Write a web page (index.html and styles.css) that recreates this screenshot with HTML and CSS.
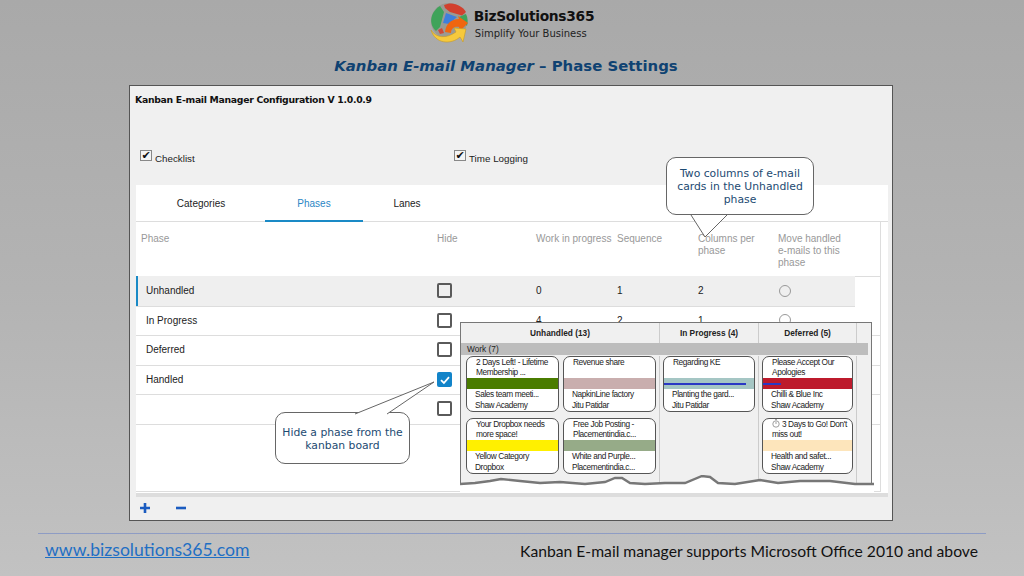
FILE: index.html
```html
<!DOCTYPE html>
<html lang="en">
<head>
    <meta charset="UTF-8">
    <title>Kanban E-mail Manager - Phase Settings</title>
    <link rel="stylesheet" href="styles.css">
</head>
<body>
<div class="slide">
    <header class="brand">
        <svg class="logo" width="42" height="42" viewBox="0 0 42 42">
            <circle cx="20" cy="19" r="18" fill="#9a9a94"/>
            <path d="M15 3C23 -1 33 3 37 10L33 13.5L21 10L16 6Z" fill="#d2402e"/>
            <path d="M11 4L15 10L11 25L7 29C0 23 0 11 11 4Z" fill="#3fa35a"/>
            <path d="M17 11L28 15L20 22L14 21Z" fill="#3f7fdc"/>
            <path d="M30 15L37 12C39 16 39 20 38 24L33 19Z" fill="#3fa35a"/>
            <path d="M9 28L13 26L15 31L11 32Z" fill="#cf4a3a"/>
            <path d="M16 30C17 22 22 17 30 17L29 14L39 21L31 29L30 25C25 24 22 27 22 31Z" fill="#f0660f"/>
            <path d="M2 28C7 36 17 37 27 30L25 26L37 27L34 40L31 35C22 43 6 42 2 28Z" fill="#f6c93c" stroke="#c79a25" stroke-width=".6"/>
        </svg>
        <div class="brand-text">
            <div class="brand-name">BizSolutions365</div>
            <div class="brand-tag">Simplify Your Business</div>
        </div>
    </header>

    <h1 class="slide-title"><em>Kanban E-mail Manager</em> – Phase Settings</h1>

    <main class="window">
        <div class="window-title">Kanban E-mail Manager Configuration V 1.0.0.9</div>
        <div class="options">
            <label class="option option-first"><span class="tick">✔</span>Checklist</label>
            <label class="option"><span class="tick">✔</span>Time Logging</label>
        </div>

        <section class="panel">
            <nav class="tabs">
                <span class="tab">Categories</span>
                <span class="tab tab-active">Phases</span>
                <span class="tab tab-last">Lanes</span>
            </nav>
            <div class="table">
                <div class="row head">
                    <span>Phase</span><span>Hide</span><span>Work in progress</span><span>Sequence</span>
                    <span>Columns per<br>phase</span><span>Move handled<br>e-mails to this<br>phase</span>
                </div>
                <div class="row row-selected">
                    <span>Unhandled</span><span class="box"></span><span>0</span><span>1</span><span>2</span><span class="radio"></span>
                </div>
                <div class="row">
                    <span>In Progress</span><span class="box"></span><span>4</span><span>2</span><span>1</span><span class="radio"></span>
                </div>
                <div class="row">
                    <span>Deferred</span><span class="box"></span>
                </div>
                <div class="row">
                    <span>Handled</span>
                    <span class="box box-on"><svg width="14" height="14" viewBox="0 0 14 14"><path d="M3 7.2L5.9 10L11 4.2" fill="none" stroke="#fff" stroke-width="1.8"/></svg></span>
                </div>
                <div class="row">
                    <span></span><span class="box"></span>
                </div>
            </div>
        </section>

        <div class="toolbar">
            <svg width="12" height="12" viewBox="0 0 12 12"><path d="M6 1V11M1 6H11" stroke="#1b5cc0" stroke-width="2.6"/></svg>
            <svg width="12" height="12" viewBox="0 0 12 12"><path d="M1 6H11" stroke="#1b5cc0" stroke-width="2.6"/></svg>
        </div>
    </main>

    <!-- screenshot of the board pasted over the settings table -->
    <div class="board">
        <div class="board-head">
            <span>Unhandled (13)</span><span>In Progress (4)</span><span>Deferred (5)</span>
        </div>
        <div class="lane">Work (7)</div>
        <div class="cards">
            <div class="col-double">
                <article class="card"><p>2 Days Left! - Lifetime<br>Membership ...</p><i class="band c-green"></i><p class="meta">Sales team meeti...<br>Shaw Academy</p></article>
                <article class="card"><p>Revenue share<br>&nbsp;</p><i class="band c-rose"></i><p class="meta">NapkinLine factory<br>Jitu Patidar</p></article>
                <article class="card"><p>Your Dropbox needs<br>more space!</p><i class="band c-yellow"></i><p class="meta">Yellow Category<br>Dropbox</p></article>
                <article class="card"><p>Free Job Posting -<br>Placementindia.c...</p><i class="band c-sage"></i><p class="meta">White and Purple...<br>Placementindia.c...</p></article>
            </div>
            <div class="col-single">
                <article class="card"><p>Regarding KE<br>&nbsp;</p><i class="band c-teal"><b class="bar bar-long"></b></i><p class="meta">Planting the gard...<br>Jitu Patidar</p></article>
            </div>
            <div class="col-single col-last">
                <article class="card"><p>Please Accept Our<br>Apologies</p><i class="band c-red"><b class="bar bar-short"></b></i><p class="meta">Chilli &amp; Blue Inc<br>Shaw Academy</p></article>
                <article class="card"><p><svg class="timer" width="8" height="9" viewBox="0 0 8 9"><circle cx="4" cy="5" r="3.2" fill="none" stroke="#777" stroke-width=".7"/><path d="M3 .6H5M4 5V2.8" stroke="#777" stroke-width=".7"/></svg> 3 Days to Go! Don't<br>miss out!</p><i class="band c-cream"></i><p class="meta">Health and safet...<br>Shaw Academy</p></article>
            </div>
        </div>
        <svg class="tear" width="414" height="18" viewBox="0 0 414 18">
            <path d="M0 9L15 8L30 6L41 4L60 6L80 8L100 7L125 9L145 7L155 3L162 3L170 8L185 9L205 8L225 8L242 1L250 2L258 8L275 9L300 5L318 8L340 6L370 6L395 9L414 9V18H0Z" fill="#fff"/>
            <path d="M0 9L15 8L30 6L41 4L60 6L80 8L100 7L125 9L145 7L155 3L162 3L170 8L185 9L205 8L225 8L242 1L250 2L258 8L275 9L300 5L318 8L340 6L370 6L395 9L414 9" fill="none" stroke="#777" stroke-width="2.4"/>
        </svg>
    </div>

    <div class="callout callout-columns">
        Two columns of e-mail cards in the Unhandled phase
        <svg class="tail" width="40" height="26" viewBox="0 0 40 26"><path d="M1 1L15 23L37 1" fill="#fff" stroke="#666"/></svg>
    </div>
    <div class="callout callout-hide">
        Hide a phase from the kanban board
        <svg class="tail" width="84" height="36" viewBox="0 0 84 36"><path d="M1 33L80 1L33 33" fill="#fff" stroke="#666"/></svg>
    </div>

    <footer class="foot">
        <a class="site" href="#">www.bizsolutions365.com</a>
        <span>Kanban E-mail manager supports Microsoft Office 2010 and above</span>
    </footer>
</div>
</body>
</html>
```

FILE: styles.css
```css
* {
    box-sizing: border-box;
}
body {
    margin: 0;
    font-family: "Liberation Sans", Arial, sans-serif;
}
.slide {
    position: relative;
    width: 1024px;
    height: 576px;
    overflow: hidden;
    padding-top: 2px;
    background: linear-gradient(#a9a9a9, #b3b3b3 50%, #c2c2c2);
}

/* logo + title */
.brand {
    display: flex;
    justify-content: center;
    height: 44px;
    padding-right: 1px;
}
.logo {
    margin-right: 3px;
}
.brand-text {
    padding-top: 5px;
}
.brand-name {
    font: bold 13.8px/18px "DejaVu Sans", sans-serif;
    color: #111;
    letter-spacing: -0.3px;
}
.brand-tag {
    font: 10px/13px "DejaVu Sans", sans-serif;
    color: #222;
    margin: 2px 0 0 1px;
}
.slide-title {
    margin: 11px 12px 0 0;
    height: 28px;
    text-align: center;
    font: bold 14.9px/18px "DejaVu Sans", sans-serif;
    color: #0f4272;
}

/* settings window */
.window {
    width: 764px;
    height: 436px;
    margin-left: 129px;
    padding: 0 4px 0 6px;
    border: 1px solid #555;
    background: #f0f0f0;
    color: #222;
    font-size: 9.5px;
}
.window-title {
    margin-left: -1px;
    padding-top: 8px;
    height: 63px;
    color: #111;
    font: bold 9.3px/12px "DejaVu Sans", sans-serif;
    letter-spacing: -0.29px;
}
.options {
    display: flex;
    height: 36px;
    padding-left: 4px;
}
.option {
    display: flex;
    align-items: flex-end;
    height: 15px;
    line-height: 11px;
    font-size: 9.8px;
}
.option-first {
    width: 314px;
}
.tick {
    display: block;
    width: 12px;
    height: 11px;
    margin: 0 3px 3px 0;
    border: 1px solid #888;
    background: #f4f4f4;
    color: #111;
    font: bold 11px/9px "DejaVu Sans", sans-serif;
    text-align: center;
}
.panel {
    height: 312px;
    background: #fff;
    border-bottom: 4px solid #ddd;
}
.tabs {
    display: flex;
    height: 37px;
    border-bottom: 1px solid #ddd;
    padding-left: 129px;
}
.tab {
    width: 98px;
    padding-top: 13px;
    text-align: center;
    font-size: 10px;
    line-height: 12px;
}
.tab:first-child {
    width: 0;
    margin-left: -64px;
    margin-right: 64px;
    white-space: nowrap;
    display: flex;
    justify-content: center;
}
.tab-last {
    width: 88px;
}
.tab-active {
    color: #2b86c5;
    border-bottom: 2px solid #1a8ac6;
    height: 37px;
}
.table {
    width: 745px;
    height: 270px;
    border-right: 1px solid #ddd;
    border-bottom: 1px solid #ddd;
}
.row {
    display: grid;
    grid-template-columns: 291px 99px 81px 81px 80px 1fr;
    align-items: center;
    height: 29.5px;
    width: 745px;
    padding-left: 10px;
    font-size: 10px;
    box-shadow: 0 1px #ddd;
}
.row > span:nth-child(n+2) {
    justify-self: start;
}
.row-selected {
    width: 719px;
    background: #efefef;
    border-left: 2px solid #1a8ac6;
    padding-left: 8px;
}
.head {
    height: 54px;
    align-items: start;
    padding: 11px 0 0 5px;
    line-height: 12px;
    color: #999;
    grid-template-columns: 296px 99px 81px 81px 80px 1fr;
}
.box {
    width: 15px;
    height: 15px;
    border: 2px solid #5a5a5a;
    border-radius: 2px;
}
.box-on {
    border: none;
    background: #1284c9;
    display: block;
}
.box-on svg {
    display: block;
    margin: 1px 0 0 1px;
}
.radio {
    width: 12px;
    height: 12px;
    margin-left: 1px;
    border: 1px solid #999;
    border-radius: 50%;
}
.toolbar {
    display: flex;
    gap: 24px;
    padding: 5px 0 0 3px;
}

/* pasted board */
.board {
    position: absolute;
    left: 460px;
    top: 322px;
    width: 412px;
    height: 164px;
    border: 1px solid #777;
    border-bottom: none;
    background: #f0f0f0;
    color: #222;
    font-size: 8.3px;
}
.board-head {
    display: grid;
    grid-template-columns: 199px 99px 98px;
    height: 20px;
    font-weight: bold;
    line-height: 20px;
    text-align: center;
}
.board-head span {
    border-right: 1px solid #ccc;
}
.lane {
    width: 407px;
    height: 12px;
    padding-left: 6px;
    background: #bdbdbd;
    line-height: 12px;
}
.cards {
    display: flex;
    height: 132px;
    padding-top: 1px;
}
.col-double {
    display: grid;
    grid-template-columns: 93px 93px;
    gap: 6px 4px;
    width: 199px;
    padding-left: 5px;
    align-content: start;
    border-right: 1px solid #ccc;
}
.col-single {
    display: flex;
    flex-direction: column;
    gap: 6px;
    width: 99px;
    padding: 0 3px;
    border-right: 1px solid #ccc;
}
.col-last {
    width: 98px;
}
.card {
    height: 56px;
    border: 1px solid #555;
    border-radius: 7px;
    background: #fff;
    line-height: 10px;
    letter-spacing: -0.38px;
    overflow: hidden;
}
.card p {
    margin: 0;
    height: 21px;
    padding-left: 9px;
    white-space: nowrap;
}
.card .meta {
    padding-left: 8px;
    line-height: 11px;
}
.band {
    position: relative;
    display: block;
    height: 11px;
}
.c-green { background: #4a7c00; }
.c-rose { background: #c9aeae; }
.c-yellow { background: #fff000; }
.c-sage { background: #96ab88; }
.c-teal { background: #a5c6c4; }
.c-red { background: #bd1a2c; }
.c-cream { background: #fde5bb; }
.bar {
    position: absolute;
    left: 0;
    top: 5px;
    height: 2px;
    background: #2a38c4;
}
.bar-long { width: 82px; }
.bar-short { width: 18px; }
.timer {
    vertical-align: -1px;
}
.tear {
    position: absolute;
    left: -1px;
    top: 152px;
    filter: blur(0.6px);
}

/* callouts */
.callout {
    position: absolute;
    border: 1px solid #666;
    border-radius: 10px;
    background: #fff;
    color: #1c4a72;
    font: 10.8px/13px "DejaVu Sans", sans-serif;
    text-align: center;
}
.callout-columns {
    left: 666px;
    top: 157px;
    width: 148px;
    height: 58px;
    padding: 9px 4px 0;
}
.callout-columns .tail {
    position: absolute;
    left: 23px;
    top: 56px;
}
.callout-hide {
    left: 275px;
    top: 412px;
    width: 135px;
    height: 52px;
    padding: 13px 4px 0;
}
.callout-hide .tail {
    position: absolute;
    left: 78px;
    top: -32px;
}

/* footer */
.foot {
    position: absolute;
    left: 38px;
    top: 533px;
    display: flex;
    justify-content: space-between;
    align-items: flex-start;
    width: 948px;
    padding: 5px 8px 0 7px;
    border-top: 1px solid #8e9cc4;
    font: 15.7px/24px Lato, sans-serif;
    color: #111;
}
.site {
    color: #1f6fc4;
    font-size: 17.6px;
    line-height: 22px;
}
```
